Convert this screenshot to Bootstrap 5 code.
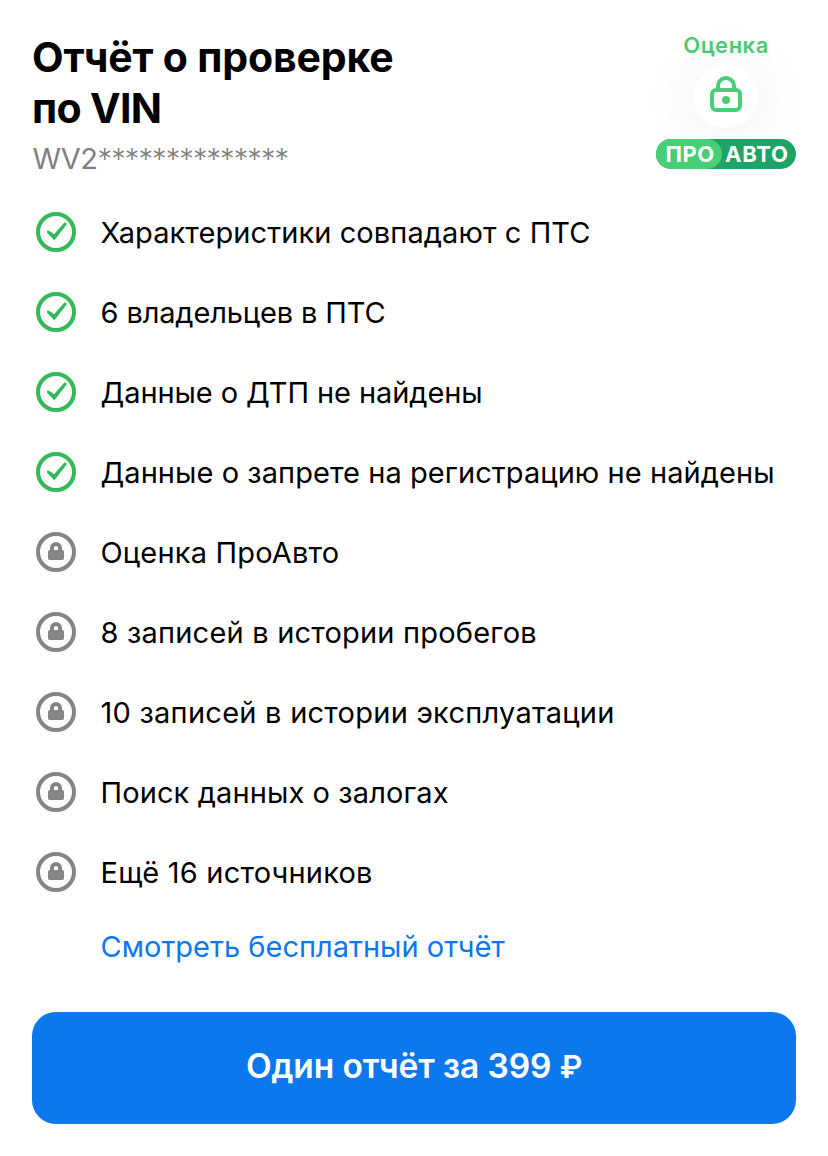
<!DOCTYPE html>
<html lang="ru">
<head>
<meta charset="utf-8">
<meta name="viewport" content="width=device-width, initial-scale=1">
<title>Отчёт о проверке по VIN</title>
<link href="https://cdn.jsdelivr.net/npm/bootstrap@5.3.0/dist/css/bootstrap.min.css" rel="stylesheet">
<style>
body{font-family:Inter,"Liberation Sans",sans-serif;color:#000;background:#fff}
.report{height:1156px;padding:32px 32px 0;overflow:hidden}
.report-head{height:160px}
.report-title{font-size:41px;line-height:51px;font-weight:700;letter-spacing:-.15px}
.title-second{letter-spacing:-.65px}
.report-vin{font-size:29px;line-height:36px;color:#808080;margin:7px 0 0 .5px;font-weight:400;letter-spacing:-.4px}
.vin-mask{font-weight:300;letter-spacing:-.9px}
.rating{width:140px}
.rating-label{font-size:22px;line-height:26px;font-weight:600;letter-spacing:.5px;color:#48cf75}
.rating-lock{width:64px;height:64px;margin-top:6px;background:#fff;box-shadow:0 5px 60px 6px rgba(0,0,0,.06)}
.rating-lock svg{margin-bottom:4px}
.brand{height:30px;margin-top:11px;width:140px;background:#1fa266;color:#fff;font-size:22px;line-height:30px;font-weight:700}
.brand-pro{width:66px;background:#48cf75;padding-left:9.500px;letter-spacing:.5px}
.brand-auto{padding-left:3px;letter-spacing:.8px}
.check-row{height:80px;padding-left:4px;font-size:29px}
.check-row svg{margin-right:24.500px}
.check-row span{padding-top:2px}
.check-row:nth-child(1){letter-spacing:.08px}
.check-row:nth-child(2){letter-spacing:-.13px}
.check-row:nth-child(3){letter-spacing:-.08px}
.check-row:nth-child(4){letter-spacing:.06px}
.check-row:nth-child(5){letter-spacing:.18px}
.check-row:nth-child(6){letter-spacing:.2px}
.check-row:nth-child(7){letter-spacing:.25px}
.check-row:nth-child(8){letter-spacing:.11px}
.check-row:nth-child(9){letter-spacing:.2px}
.free-link{font-size:29px;line-height:36px;color:#0b78ed;margin:17px 0 0 68.500px}
.buy{height:112px;margin-top:47px;padding:0 0 3px;border-radius:24px;font-size:33.500px;font-weight:600;letter-spacing:-.12px;color:#fff;background:#0b78ed}
.buy:hover{color:#fff;background:#0869d2}
.rouble{font-size:31px}
</style>
</head>
<body>
<svg class="d-none">
<symbol id="ok" viewBox="0 0 40 40"><circle cx="20" cy="20" r="18" fill="none" stroke="#35b857" stroke-width="4"/><path d="M11 20.5Q10.500 19.500 11.300 18.800Q12.200 18.200 13 18.800L18.200 22L28 11Q29.300 10 30.300 11Q31.100 12 30.300 13L18.300 28.500Z" fill="#35b857"/></symbol>
<symbol id="locked" viewBox="0 0 40 40"><circle cx="20" cy="20" r="18" fill="none" stroke="#858585" stroke-width="4"/><path d="M16 19V16a4 4 0 0 1 8 0V19" fill="none" stroke="#858585" stroke-width="4"/><rect x="12" y="18" width="16" height="10" rx="2" fill="#858585"/></symbol>
</svg>
<main class="report d-flex flex-column">
<header class="report-head d-flex justify-content-between align-items-start">
<div>
<h1 class="report-title mb-0">Отчёт о проверке<br><span class="title-second">по VIN</span></h1>
<p class="report-vin">WV2<span class="vin-mask">**************</span></p>
</div>
<div class="rating d-flex flex-column align-items-center">
<span class="rating-label">Оценка</span>
<span class="rating-lock rounded-circle d-flex align-items-center justify-content-center">
<svg width="32" height="36" viewBox="0 0 32 36" fill="none" stroke="#48cf75" stroke-width="4"><rect x="2" y="14" width="28" height="20" rx="4"/><path d="M8 14V10a8 8 0 0 1 16 0v4"/><circle cx="16" cy="24" r="4" fill="#48cf75" stroke="none"/></svg>
</span>
<div class="brand rounded-pill d-flex"><span class="brand-pro rounded-pill">ПРО</span><span class="brand-auto">АВТО</span></div>
</div>
</header>
<ul class="list-unstyled mb-0">
<li class="check-row d-flex align-items-center"><svg width="40" height="40"><use href="#ok"/></svg><span>Характеристики совпадают с ПТС</span></li>
<li class="check-row d-flex align-items-center"><svg width="40" height="40"><use href="#ok"/></svg><span>6 владельцев в ПТС</span></li>
<li class="check-row d-flex align-items-center"><svg width="40" height="40"><use href="#ok"/></svg><span>Данные о ДТП не найдены</span></li>
<li class="check-row d-flex align-items-center"><svg width="40" height="40"><use href="#ok"/></svg><span>Данные о запрете на регистрацию не найдены</span></li>
<li class="check-row d-flex align-items-center"><svg width="40" height="40"><use href="#locked"/></svg><span>Оценка ПроАвто</span></li>
<li class="check-row d-flex align-items-center"><svg width="40" height="40"><use href="#locked"/></svg><span>8 записей в истории пробегов</span></li>
<li class="check-row d-flex align-items-center"><svg width="40" height="40"><use href="#locked"/></svg><span>10 записей в истории эксплуатации</span></li>
<li class="check-row d-flex align-items-center"><svg width="40" height="40"><use href="#locked"/></svg><span>Поиск данных о залогах</span></li>
<li class="check-row d-flex align-items-center"><svg width="40" height="40"><use href="#locked"/></svg><span>Ещё 16 источников</span></li>
</ul>
<a class="free-link text-decoration-none align-self-start" href="#">Смотреть бесплатный отчёт</a>
<button class="buy btn border-0 w-100" type="button">Один отчёт за 399 <span class="rouble">₽</span></button>
</main>
<script src="https://cdn.jsdelivr.net/npm/bootstrap@5.3.0/dist/js/bootstrap.bundle.min.js"></script>
</body>
</html>
